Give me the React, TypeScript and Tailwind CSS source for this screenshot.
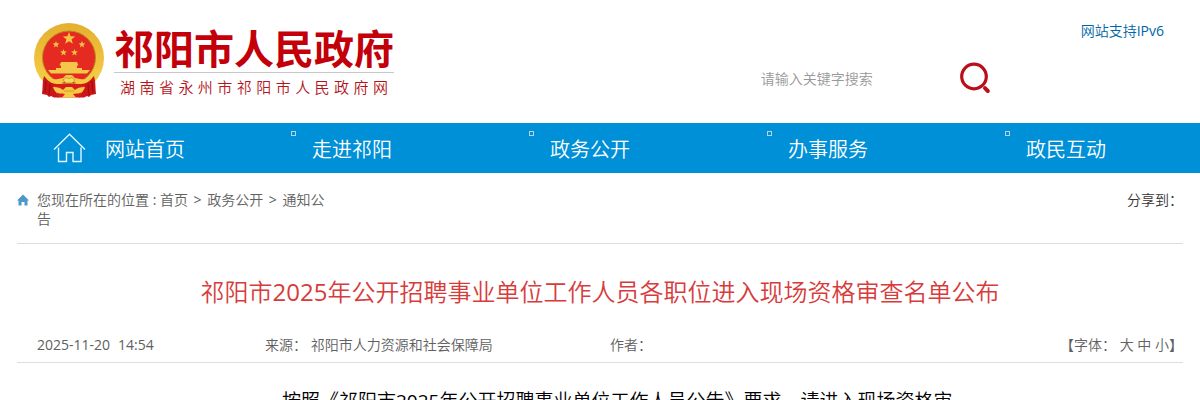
import React from 'react';

const sections = ['走进祁阳', '政务公开', '办事服务', '政民互动'];

function Star({ x, y, r }: { x: number; y: number; r: number }) {
  const points = Array.from({ length: 10 }, (_, i) => {
    const radius = i % 2 === 0 ? r : r * 0.42;
    const angle = (Math.PI / 5) * i - Math.PI / 2;
    return `${x + radius * Math.cos(angle)},${y + radius * Math.sin(angle)}`;
  }).join(' ');
  return <polygon points={points} fill="#f5c445" />;
}

function Emblem() {
  return (
    <svg viewBox="0 0 70 76" className="h-[76px] w-[70px] shrink-0" aria-hidden="true">
      <defs>
        <linearGradient id="gold" x1="0" y1="0" x2="0" y2="1">
          <stop offset="0" stopColor="#e3b02f" />
          <stop offset="0.5" stopColor="#efc03c" />
          <stop offset="1" stopColor="#f8d44e" />
        </linearGradient>
      </defs>
      <circle cx="35" cy="35" r="35" fill="url(#gold)" />
      <circle cx="35" cy="34.500" r="26.500" fill="#e52a22" stroke="#b98a20" strokeWidth="1" />
      <Star x={35} y={15.5} r={6.5} />
      <Star x={22} y={21.5} r={3.6} />
      <Star x={48} y={21.5} r={3.6} />
      <Star x={29.5} y={29.5} r={3.6} />
      <Star x={40.5} y={29.5} r={3.6} />
      <path d="M27 39h16l1.500 3.500H43V45h5v2h8l-3 3.500H17L14 47h8v-2h5v-2.500h-1.500z" fill="#f4c64a" />
      <path d="M16 51h38l-6 7H22z" fill="#e52a22" />
      <path d="M20 61h30l-4 13.500H24z" fill="#d81c1b" />
      <path d="M10 53c4 4 8 6 12 7l-2 5 5 9.500h-5l-3-1.500-2 1-2-2-5-1c1-6 0-12 2-18z" fill="#cb1517" />
      <path d="M60 53c-4 4-8 6-12 7l2 5-5 9.500h5l3-1.500 2 1 2-2 5-1c-1-6 0-12-2-18z" fill="#cb1517" />
      <path d="M12 58l-1 12M16 61l-1 11M58 58l1 12M54 61l1 11" stroke="#a00f12" strokeWidth="1.200" fill="none" />
      <path d="M10 52c5 4 10 5 14 4l5-1 3-3h6l3 3 5 1c4 1 9 0 14-4-3 6-8 9-13 9-4 0-6-2-8-2h-8c-2 0-4 2-8 2-5 0-10-3-13-9z" fill="#f6c944" />
      <path d="M29 57l3-2.500 3 1 3-1 3 2.500-3 3h-6z" fill="#f8d661" stroke="#c98f1b" strokeWidth="0.800" />
      <path d="M19 64c5 0 8 1 10 3l3-3h6l3 3c2-2 5-3 10-3-1 4-4 7-9 6.500l-3 .5 3 3.500H28l3-3.500-3-.5c-5 .5-8-2.500-9-6.500z" fill="#f6c944" />
      <path d="M30 68h10" stroke="#cf8d1c" strokeWidth="0.800" />
    </svg>
  );
}

function HomeOutline() {
  return (
    <svg viewBox="0 0 33 30" className="h-[30px] w-[33px]" fill="none" stroke="#dff5ff" strokeWidth="1.400" aria-hidden="true">
      <path d="M1 16.500 16.500 1.200 32 16.500M5.500 14.500v14h8v-9h6.500v9h8v-14" />
    </svg>
  );
}

export default function App() {
  return (
    <div className="bg-white font-['Open_Sans','Noto_Sans_CJK_SC_DemiLight','Noto_Sans_CJK_SC',sans-serif] text-sm text-[#606060]">
      <header className="flex h-[123px] items-start justify-between pl-[34px]">
        <div className="flex gap-[10px] pt-[23px]">
          <Emblem />
          <div className="flex flex-col">
            <h1 className="border-b border-[#c9c9c9] font-['Noto_Sans_CJK_SC',sans-serif] text-[40px] leading-[49px] font-bold text-[#c30009]">
              祁阳市人民政府
            </h1>
            <p className="px-[6px] pt-1 text-[15px] leading-5 text-[#b3151b] [text-align-last:justify]">
              湖南省永州市祁阳市人民政府网
            </p>
          </div>
        </div>
        <div className="flex">
          <form className="mt-[62px] flex items-center" onSubmit={(e) => e.preventDefault()}>
            <input
              type="text"
              aria-label="请输入关键字搜索"
              placeholder="请输入关键字搜索"
              className="h-8 w-[198px] bg-transparent outline-none placeholder:text-[#999]"
            />
            <button type="submit" aria-label="搜索" className="block">
              <svg viewBox="0 0 32 32" className="h-8 w-8" fill="none" stroke="#b90f1a" aria-hidden="true">
                <circle cx="15" cy="14.500" r="12.300" strokeWidth="3.200" />
                <path d="M26 26.200 28.800 29" strokeWidth="4" strokeLinecap="round" />
              </svg>
            </button>
          </form>
          <a href="#ipv6" className="mr-9 ml-[90px] pt-[21px] leading-5 text-[#0066a5]">
            网站支持IPv6
          </a>
        </div>
      </header>

      <nav className="grid h-[50px] grid-cols-5 bg-[#0090d7] pl-[10px] text-[20px] leading-[54px] text-white">
        <a href="#home" className="flex gap-[19px] pl-[43px]">
          <span className="pt-[10px]">
            <HomeOutline />
          </span>
          网站首页
        </a>
        {sections.map((name) => (
          <a key={name} href={`#${name}`} className="flex gap-4 pl-[43px]">
            <span className="mt-2 h-[5px] w-[5px] border border-[#b5d3e2]" />
            {name}
          </a>
        ))}
      </nav>

      <main className="px-[17px]">
        <div className="flex h-[71px] items-start justify-between border-b border-[#ddd] pt-[17px]">
          <div className="flex w-[310px] gap-2">
            <svg viewBox="0 0 12 12" className="mt-1 h-3 w-3 shrink-0" fill="#4f97c9" aria-hidden="true">
              <path d="M6 0.500 12 6.500H10.500V11.500H7.500V8H4.500V11.500H1.500V6.500H0z" />
            </svg>
            <p className="leading-[19px]">
              您现在所在的位置 : <a href="#home">首页</a>
              <span className="px-[2px]"> &gt; </span>
              <a href="#zwgk">政务公开</a>
              <span className="px-[2px]"> &gt; </span>
              <a href="#tzgg">通知公告</a>
            </p>
          </div>
          <span className="leading-[19px] text-[#333]">分享到：</span>
        </div>

        <h2 className="pt-[32px] text-center text-[24px] leading-8 text-[#d73c3c]">
          祁阳市2025年公开招聘事业单位工作人员各职位进入现场资格审查名单公布
        </h2>

        <div className="mt-[19px] flex h-[36px] items-center border-b border-[#ddd] pl-5">
          <span className="flex w-[228px] gap-2">
            <span>2025-11-20</span>
            <span>14:54</span>
          </span>
          <span className="w-[345px]">来源： 祁阳市人力资源和社会保障局</span>
          <span>作者：</span>
          <span className="ml-auto">
            【字体： <button type="button">大</button> <button type="button">中</button> <button type="button">小</button>】
          </span>
        </div>

        <div className="h-[37px] overflow-hidden pt-[22px] pl-[265px] text-[19px] leading-8 text-black">
          <p>按照《祁阳市2025年公开招聘事业单位工作人员公告》要求，请进入现场资格审</p>
        </div>
      </main>
    </div>
  );
}
